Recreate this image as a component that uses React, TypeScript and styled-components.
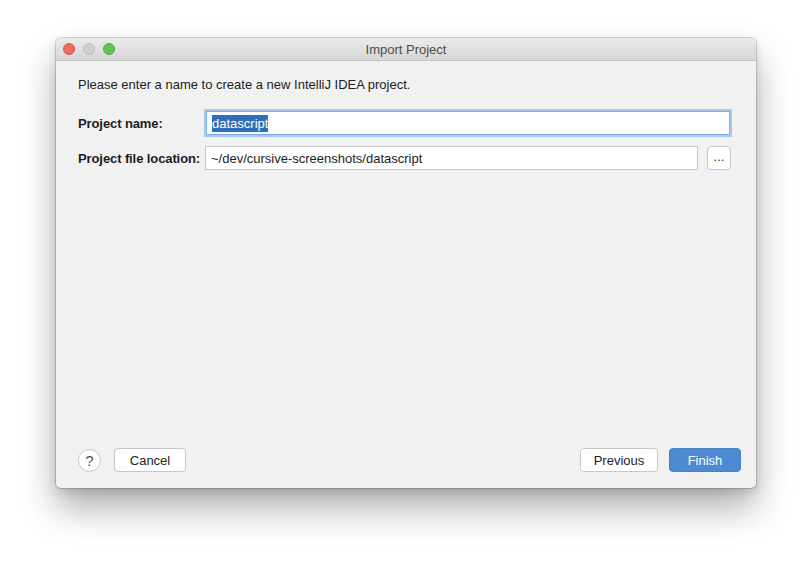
import React from 'react'
import styled, { createGlobalStyle } from 'styled-components'

const GlobalStyle = createGlobalStyle`
  html, body {
    margin: 0;
    padding: 0;
    background: #ffffff;
    font-family: "Liberation Sans", Arial, sans-serif;
    font-size: 13px;
    color: #1d1d1d;
  }
`

const Page = styled.div`
  width: 812px;
  height: 562px;
  box-sizing: border-box;
  padding: 38px 56px 0 56px;
`

const Window = styled.div`
  width: 700px;
  height: 450px;
  border-radius: 5px;
  background: #f1f1f1;
  display: flex;
  flex-direction: column;
  overflow: hidden;
  box-shadow: 0 0 0 1px rgba(0, 0, 0, 0.16), 0 20px 36px rgba(0, 0, 0, 0.32),
    0 4px 10px rgba(0, 0, 0, 0.12);
`

const TitleBar = styled.div`
  height: 22px;
  display: flex;
  align-items: center;
  position: relative;
  background: linear-gradient(#ebebeb, #d6d6d6);
  border-bottom: 1px solid #c4c4c4;
  padding: 0 7px;
`

const Lights = styled.div`
  display: flex;
  gap: 8px;
`

const Light = styled.span<{ $color: string; $border: string }>`
  width: 12px;
  height: 12px;
  border-radius: 50%;
  box-sizing: border-box;
  background: ${({ $color }) => $color};
  border: 1px solid ${({ $border }) => $border};
`

const Title = styled.div`
  position: absolute;
  left: 0;
  right: 0;
  text-align: center;
  color: #4d4d4d;
  font-size: 13px;
  pointer-events: none;
`

const Body = styled.div`
  flex: 1;
  display: flex;
  flex-direction: column;
  padding: 16px 25px 16px 22px;
`

const Intro = styled.div`
  margin: 0 0 18px 0;
  line-height: 16px;
`

const Form = styled.div`
  display: grid;
  grid-template-columns: 127px 1fr;
  row-gap: 11px;
  align-items: center;
`

const Label = styled.label`
  font-weight: bold;
  letter-spacing: -0.1px;
`

const InputRow = styled.div`
  display: flex;
  gap: 9px;
  align-items: center;
`

const Field = styled.div<{ $focused?: boolean }>`
  flex: 1;
  height: 24px;
  box-sizing: border-box;
  background: #ffffff;
  display: flex;
  align-items: center;
  padding: 0 5px;
  border: 1px solid ${({ $focused }) => ($focused ? '#7eaee6' : '#c6c6c6')};
  box-shadow: ${({ $focused }) => ($focused ? '0 0 0 2px #a9c9f0' : 'none')};
  margin: ${({ $focused }) => ($focused ? '0 1px' : '0')};
`

const Selected = styled.span`
  background: #2f6fb8;
  color: #ffffff;
  padding: 1px 0;
`

const Ellipsis = styled.button`
  width: 24px;
  height: 24px;
  box-sizing: border-box;
  border: 1px solid #c8c8c8;
  border-radius: 4px;
  background: #ffffff;
  font-family: inherit;
  font-size: 13px;
  padding: 0 0 4px 0;
  color: #333;
  line-height: 1;
`

const Spacer = styled.div`
  flex: 1;
`

const Footer = styled.div`
  display: flex;
  align-items: center;
  margin-right: -10px;
`

const Help = styled.button`
  width: 23px;
  height: 23px;
  border-radius: 50%;
  border: 1px solid #c6c6c6;
  background: #ffffff;
  font-family: inherit;
  font-size: 15px;
  color: #555;
  padding: 0;
  margin-right: 13px;
`

const Button = styled.button<{ $primary?: boolean; $width: number }>`
  width: ${({ $width }) => $width}px;
  height: 24px;
  box-sizing: border-box;
  border-radius: 4px;
  font-family: inherit;
  font-size: 13px;
  padding: 0;
  border: 1px solid ${({ $primary }) => ($primary ? '#4a82c4' : '#c8c8c8')};
  background: ${({ $primary }) => ($primary ? '#4d8ad1' : '#ffffff')};
  color: ${({ $primary }) => ($primary ? '#ffffff' : '#1d1d1d')};
`

const ButtonGroup = styled.div`
  display: flex;
  gap: 11px;
  margin-left: auto;
`

export default function App() {
  return (
    <>
      <GlobalStyle />
      <Page>
        <Window>
          <TitleBar>
            <Lights>
              <Light $color="#ec6a5e" $border="#d65245" />
              <Light $color="#cfcfcf" $border="#bdbdbd" />
              <Light $color="#61c554" $border="#4eab41" />
            </Lights>
            <Title>Import Project</Title>
          </TitleBar>
          <Body>
            <Intro>Please enter a name to create a new IntelliJ IDEA project.</Intro>
            <Form>
              <Label>Project name:</Label>
              <InputRow>
                <Field $focused>
                  <Selected>datascript</Selected>
                </Field>
              </InputRow>
              <Label>Project file location:</Label>
              <InputRow>
                <Field>~/dev/cursive-screenshots/datascript</Field>
                <Ellipsis>...</Ellipsis>
              </InputRow>
            </Form>
            <Spacer />
            <Footer>
              <Help>?</Help>
              <Button $width={72}>Cancel</Button>
              <ButtonGroup>
                <Button $width={78}>Previous</Button>
                <Button $width={72} $primary>
                  Finish
                </Button>
              </ButtonGroup>
            </Footer>
          </Body>
        </Window>
      </Page>
    </>
  )
}
